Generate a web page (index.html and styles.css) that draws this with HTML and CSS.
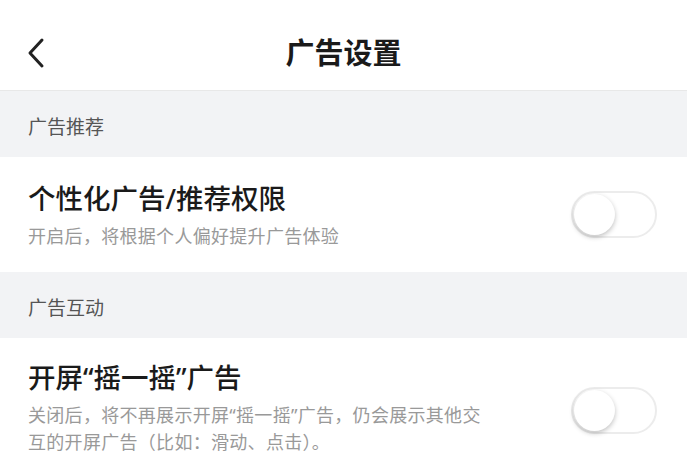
FILE: index.html
```html
<!DOCTYPE html>
<html lang="zh-CN">
    <head>
        <meta charset="utf-8">
        <title>广告设置</title>
        <link rel="stylesheet" href="styles.css">
    </head>
    <body>
        <header class="nav">
            <span class="back">
                <svg width="22" height="32" viewBox="0 0 22 32"><path d="M17 3 L5 16 L17 29" fill="none" stroke="#222" stroke-width="3" stroke-linecap="round" stroke-linejoin="round"/></svg>
            </span>
            <h1 class="title">广告设置</h1>
        </header>
        <div class="group">广告推荐</div>
        <div class="row">
            <div class="text">
                <div class="name">个性化广告/推荐权限</div>
                <div class="desc">开启后，将根据个人偏好提升广告体验</div>
            </div>
            <span class="switch"><span class="knob"></span></span>
        </div>
        <div class="group">广告互动</div>
        <div class="row tall">
            <div class="text">
                <div class="name">开屏“摇一摇”广告</div>
                <div class="desc">关闭后，将不再展示开屏“摇一摇”广告，仍会展示其他交互的开屏广告（比如：滑动、点击）。</div>
            </div>
            <span class="switch"><span class="knob"></span></span>
        </div>
    </body>
</html>
```

FILE: styles.css
```css
html, body {
    margin: 0;
    background: #fff;
}
body {
    font-family: "Noto Sans", "Noto Sans CJK SC", sans-serif;
    color: #1a1a1a;
}
.nav {
    position: relative;
    height: 91px;
    display: flex;
    align-items: center;
    justify-content: center;
    border-bottom: 1px solid #e8e8e8;
    box-sizing: border-box;
}
.back {
    position: absolute;
    left: 25px;
    top: 37px;
    display: flex;
}
.title {
    margin: 0;
    font-size: 29px;
    font-weight: 600;
    padding-top: 12px;
}
.group {
    background: #f2f3f5;
    height: 66px;
    display: flex;
    align-items: center;
    padding: 4px 28px 0;
    box-sizing: border-box;
    font-size: 19px;
    color: #555;
}
.row {
    display: flex;
    align-items: center;
    justify-content: space-between;
    padding: 0 28px;
    height: 115px;
}
.row.tall {
    height: 140px;
    align-items: flex-start;
    padding-top: 20px;
    box-sizing: border-box;
}
.name {
    font-size: 27.5px;
    font-weight: 500;
    line-height: 40px;
}
.desc {
    font-size: 18px;
    color: #999;
    line-height: 27px;
    letter-spacing: .3px;
    max-width: 466px;
    margin-top: 4px;
}
.switch {
    width: 86px;
    height: 47px;
    border: 2px solid #ececec;
    border-radius: 24px;
    box-sizing: border-box;
    display: flex;
    align-items: center;
    padding-left: 1px;
    margin-right: 2px;
}
.tall .switch {
    margin-top: 29px;
}
.knob {
    width: 41px;
    height: 41px;
    border-radius: 50%;
    background: #fff;
    box-shadow: 0 2px 5px rgba(0, 0, 0, .25);
}
```
